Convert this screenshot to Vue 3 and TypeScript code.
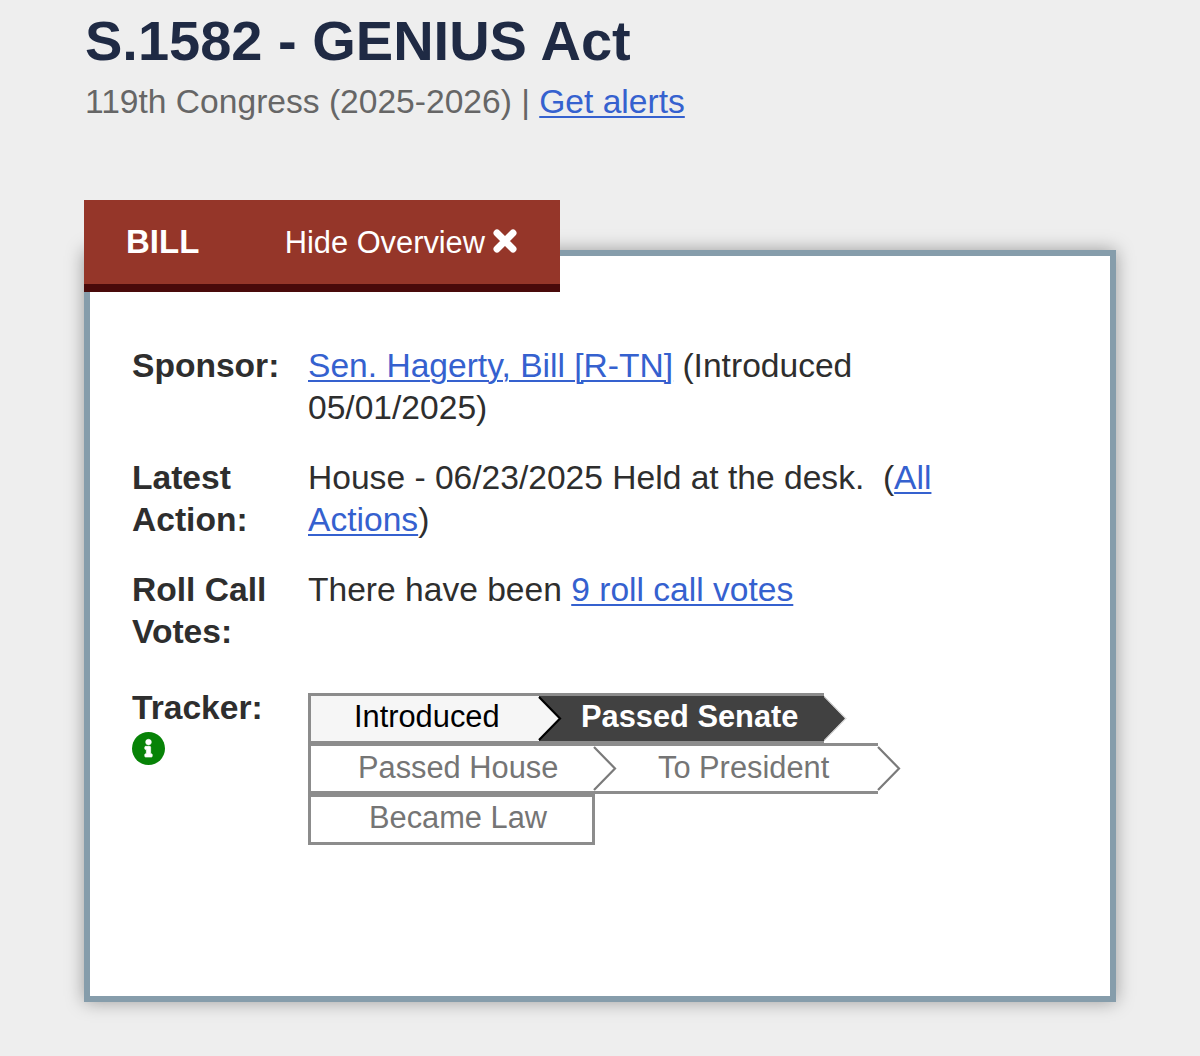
<script setup lang="ts">
import { ref } from 'vue'

interface Step {
  label: string
  state: string
  arrow: boolean
}

const showOverview = ref(true)

const tracker: Step[][] = [
  [
    { label: 'Introduced', state: 'first', arrow: true },
    { label: 'Passed Senate', state: 'selected', arrow: true }
  ],
  [
    { label: 'Passed House', state: 'house', arrow: true },
    { label: 'To President', state: 'president', arrow: true }
  ],
  [
    { label: 'Became Law', state: 'law', arrow: false }
  ]
]
</script>

<template>
  <main class="page">
    <h1>S.1582 - GENIUS Act</h1>
    <p class="congress">119th Congress (2025-2026) | <a href="#">Get alerts</a></p>

    <div class="tab">
      <strong>BILL</strong>
      <button class="toggle" @click="showOverview = !showOverview">
        <span class="toggle-text">{{ showOverview ? 'Hide' : 'Show' }} Overview</span>
        <svg class="close" viewBox="0 0 24 24">
          <path d="M4.6 4.6 19.4 19.4M19.4 4.6 4.6 19.4" />
        </svg>
      </button>
    </div>

    <section class="overview">
      <dl v-if="showOverview">
        <dt>Sponsor:</dt>
        <dd><a href="#">Sen. Hagerty, Bill [R-TN]</a> (Introduced 05/01/2025)</dd>

        <dt>Latest Action:</dt>
        <dd>House - 06/23/2025 Held at the desk.&nbsp; (<a href="#">All Actions</a>)</dd>

        <dt>Roll Call Votes:</dt>
        <dd>There have been <a href="#">9 roll call votes</a></dd>

        <dt class="tracker-label">
          Tracker:
          <svg class="info" viewBox="8 8 496 496">
            <circle cx="256" cy="256" r="248" />
            <path d="M256 118a42 42 0 1 1 0 84 42 42 0 0 1 0-84zM200 372v-24c0-7 5-12 12-12h12v-64h-12c-7 0-12-5-12-12v-24c0-7 5-12 12-12h64c7 0 12 5 12 12v100h12c7 0 12 5 12 12v24c0 7-5 12-12 12h-88c-7 0-12-5-12-12z" />
          </svg>
        </dt>
        <dd class="tracker">
          <ol v-for="(row, rowIndex) in tracker" :key="rowIndex">
            <li v-for="step in row" :key="step.label" :class="step.state">
              <span>{{ step.label }}</span>
              <svg v-if="step.arrow" class="arrow" viewBox="0 0 24 45">
                <path v-if="step.state === 'selected'" class="outline" d="M0 0 22 22.5 0 45" />
                <path class="head" d="M0 1 21 22.5 0 44" />
              </svg>
            </li>
          </ol>
        </dd>
      </dl>
    </section>
  </main>
</template>

<style>
body {
  margin: 0;
  background: #eeeeee;
}
</style>

<style scoped>
.page {
  box-sizing: border-box;
  height: 1056px;
  padding: 0 84px;
  overflow: hidden;
  font-family: "Liberation Sans", Arial, sans-serif;
  font-size: 33.6px;
  line-height: 42px;
  color: #2e2e2e;
}

a {
  color: #3561cf;
  text-decoration-thickness: 2.4px;
  text-underline-offset: 3px;
}

h1 {
  margin: 0;
  padding: 9px 0 0 1px;
  font-size: 56px;
  line-height: 64px;
  color: #1f2a44;
}

.congress {
  margin: 8px 0 77px;
  padding-left: 1px;
  color: #666666;
}

.tab {
  position: relative;
  z-index: 1;
  display: flex;
  align-items: center;
  justify-content: space-between;
  box-sizing: border-box;
  width: 476px;
  height: 92px;
  padding: 0 42px;
  background: #953629;
  border-bottom: 8px solid #490a0a;
  color: #ffffff;
}

.tab strong {
  font-size: 33px;
}

.toggle {
  display: flex;
  align-items: center;
  gap: 7px;
  padding: 0;
  border: 0;
  background: none;
  font: inherit;
  font-size: 30.8px;
  color: inherit;
}

.toggle-text {
  padding-top: 2px;
}

.close {
  width: 26px;
  height: 26px;
  margin-top: -3px;
}

.close path {
  stroke: #ffffff;
  stroke-width: 6.4;
  stroke-linecap: round;
}

.overview {
  box-sizing: border-box;
  height: 752px;
  margin-top: -42px;
  padding: 89px 42px 0;
  background: #ffffff;
  border: 6px solid #869dab;
  box-shadow: 0 0 17px rgba(0, 0, 0, 0.35);
}

dl {
  display: grid;
  grid-template-columns: 176px 700px;
  row-gap: 28px;
  margin: 0;
}

dt {
  padding-right: 24px;
  font-weight: bold;
}

dd {
  margin: 0;
}

.tracker-label {
  display: flex;
  flex-direction: column;
  gap: 3px;
  padding-top: 6px;
}

.info {
  width: 33px;
  height: 33px;
}

.info circle {
  fill: #078307;
}

.info path {
  fill: #ffffff;
  stroke: #ffffff;
  stroke-width: 10;
}

.tracker {
  padding-top: 12px;
  font-size: 30.8px;
}

ol {
  display: flex;
  margin: 0;
  padding: 0;
  list-style: none;
}

li {
  position: relative;
  box-sizing: border-box;
  display: flex;
  height: 51px;
  border: 0 solid #8c8c8c;
  border-width: 3px 0;
  line-height: 41px;
  color: #757575;
}

li:first-child {
  border-left-width: 3px;
}

.first {
  width: 231px;
  padding-left: 43px;
  background: #f6f6f6;
  color: #000000;
}

.selected {
  width: 285px;
  padding-left: 42px;
  background: #414141;
  color: #ffffff;
  font-weight: bold;
}

.house,
.president {
  margin-top: -1px;
  line-height: 43px;
}

.house {
  width: 286px;
  padding-left: 47px;
}

.president {
  width: 284px;
  padding-left: 64px;
}

.law {
  width: 287px;
  padding-left: 58px;
  border-right-width: 3px;
}

/* arrow heads lie over the start of the next step */
.arrow {
  position: absolute;
  z-index: 1;
  top: 0;
  left: 100%;
  width: 24px;
  height: 45px;
  overflow: visible;
}

.head {
  fill: #ffffff;
  stroke: #7a7a7a;
  stroke-width: 2.2;
}

.first .head {
  fill: #f6f6f6;
  stroke: #000000;
}

.selected .head {
  fill: #414141;
  stroke: none;
}

.outline {
  fill: #ffffff;
  stroke: #b0b0b0;
  stroke-width: 0.7;
}
</style>
